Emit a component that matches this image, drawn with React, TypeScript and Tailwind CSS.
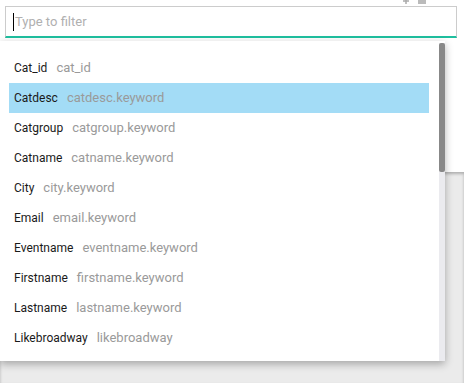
import React from "react";

const items: [string, string][] = [
  ["Cat_id", "cat_id"],
  ["Catdesc", "catdesc.keyword"],
  ["Catgroup", "catgroup.keyword"],
  ["Catname", "catname.keyword"],
  ["City", "city.keyword"],
  ["Email", "email.keyword"],
  ["Eventname", "eventname.keyword"],
  ["Firstname", "firstname.keyword"],
  ["Lastname", "lastname.keyword"],
  ["Likebroadway", "likebroadway"],
  ["Likeclassical", "likeclassical"],
];

export default function App() {
  return (
    <div
      className="relative w-[464px] h-[383px] overflow-hidden bg-white"
      style={{ fontFamily: "Roboto, 'Liberation Sans', sans-serif" }}
    >
      <div className="flex flex-col h-full">
        <div className="h-[172px] bg-white relative">
          <svg className="absolute left-[402px] top-0" width="8" height="4" viewBox="0 0 8 4">
            <path d="M4 0 V4 M1 1 H7" stroke="#aaa" strokeWidth="1.5" />
          </svg>
          <div className="absolute left-[418px] top-0 w-[8px] h-[4px] bg-[#bbb]" />
          <div className="pt-[6px] pl-[5px]">
            <div className="w-[452px] h-[32px] border border-[#cccccc] border-b-2 border-b-[#1fbf9f] flex items-center pl-[7px] relative">
              <div className="w-px h-[18px] bg-black mr-[1px]" />
              <span className="text-[13px] text-[#b0b0b0]">Type to filter</span>
            </div>
          </div>
        </div>
        <div className="flex-1 bg-[#ebebeb] shadow-[inset_0_2px_3px_rgba(0,0,0,0.25)]" />
      </div>

      <div className="absolute left-0 top-[41px] w-[445px] h-[320px] bg-white shadow-[0_3px_8px_rgba(0,0,0,0.3)] overflow-hidden">
        <div className="pt-[12px] pl-[9px] w-[429px]">
          {items.map(([n, f], i) => (
            <div
              key={n}
              className={`h-[30px] flex items-center pl-[5px] ${i === 1 ? "bg-[#a3dcf6]" : ""}`}
            >
              <span className="text-[12px] text-[#1a1a1a]">{n}</span>
              <span className="ml-[9px] text-[13px] text-[#9a9a9a]">{f}</span>
            </div>
          ))}
        </div>
        <div className="absolute right-0 top-[2px] bottom-0 w-[6px] bg-[#ebebef]">
          <div className="w-[6px] h-[129px] bg-[#888888] rounded-[2px]" />
        </div>
      </div>
    </div>
  );
}
